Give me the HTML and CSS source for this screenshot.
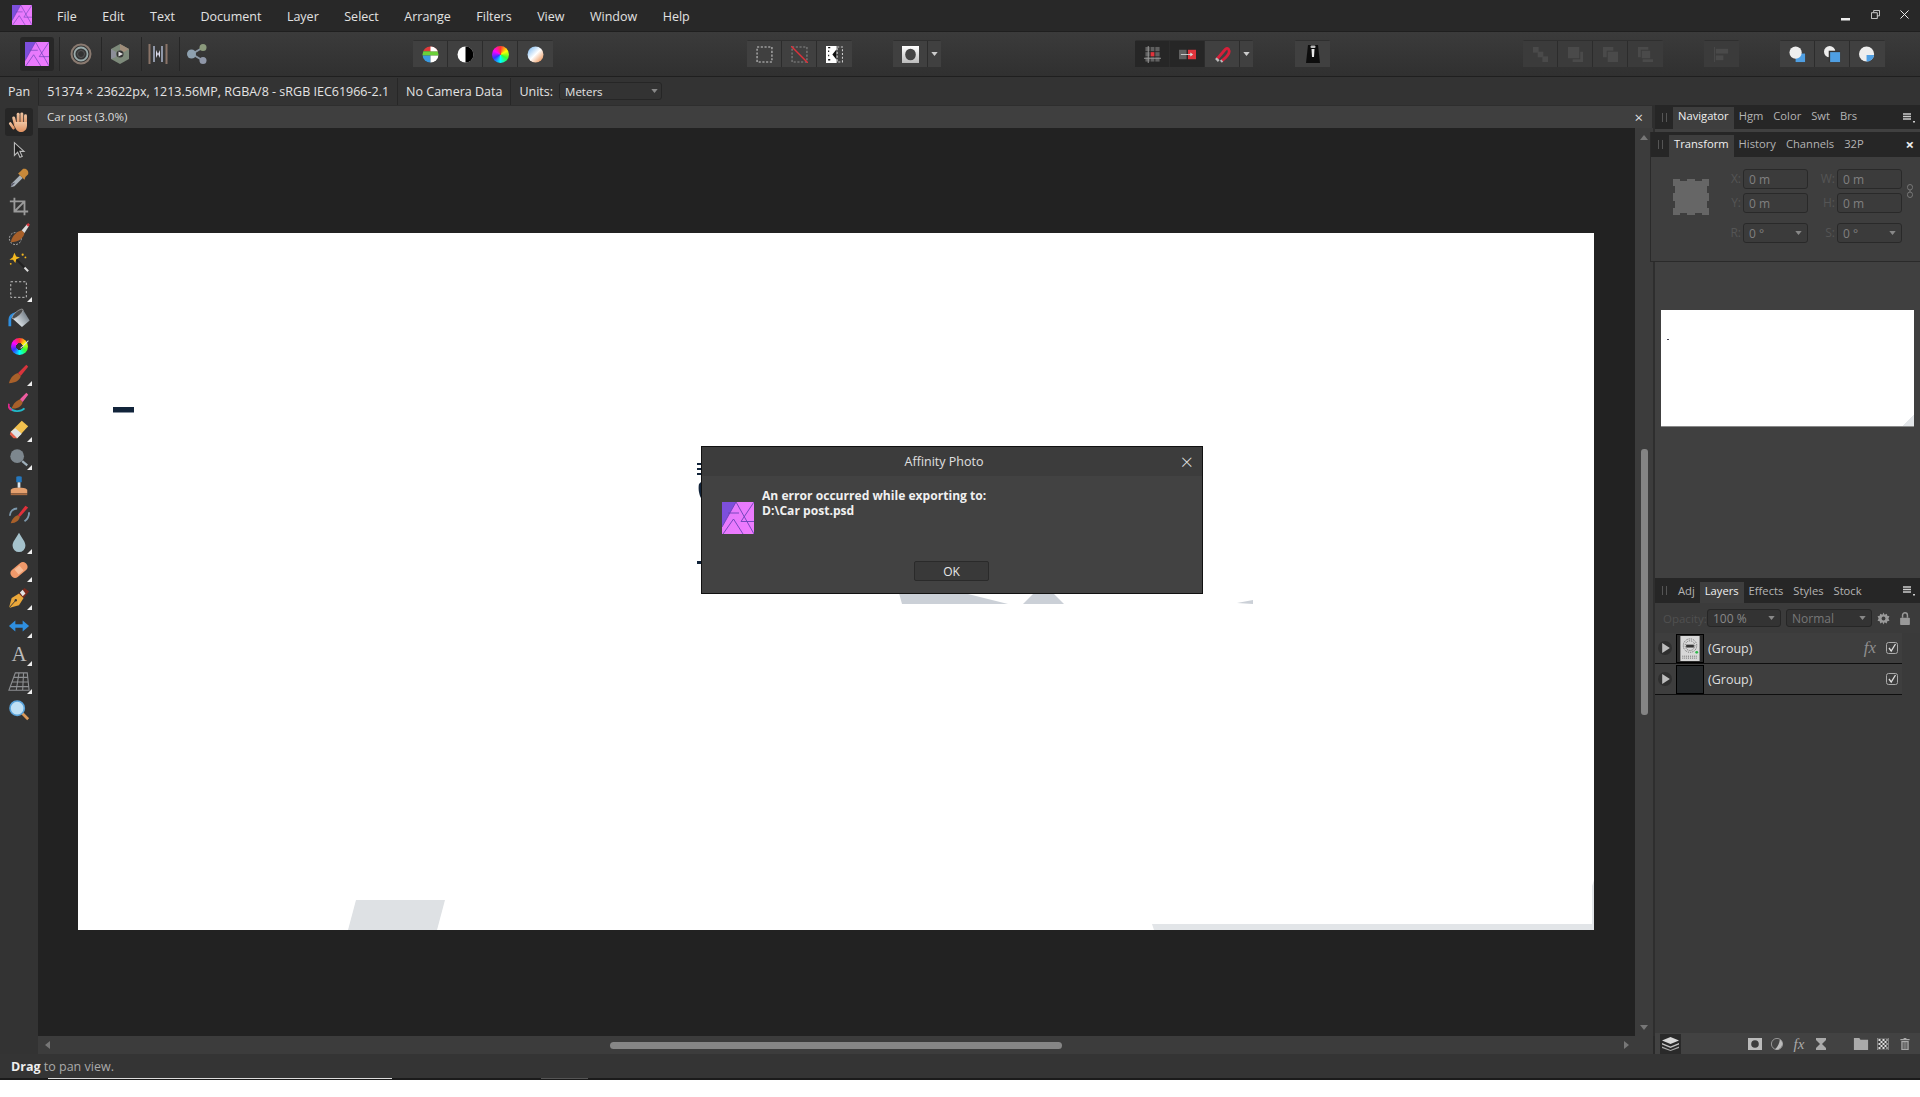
FILE: index.html
```html
<!DOCTYPE html>
<html lang="en">
<head>
<meta charset="utf-8">
<title>Affinity Photo</title>
<link rel="stylesheet" href="styles.css">
</head>
<body>
<svg class="defs" aria-hidden="true">
  <defs>
    <linearGradient id="apg" x1="0" y1="0" x2="1" y2="1"><stop offset="0" stop-color="#e278fb"/><stop offset="1" stop-color="#f07cff"/></linearGradient>
    <linearGradient id="skin" x1="0" y1="0" x2="0" y2="1"><stop offset="0" stop-color="#eec4a2"/><stop offset="1" stop-color="#e08f5e"/></linearGradient>
    <linearGradient id="silver" x1="0" y1="0" x2="1" y2="0"><stop offset="0" stop-color="#dfe6ea"/><stop offset="1" stop-color="#77818a"/></linearGradient>
    <linearGradient id="mask" x1="0" y1="0" x2="0" y2="1"><stop offset="0" stop-color="#fff"/><stop offset="1" stop-color="#bbb"/></linearGradient>
    <linearGradient id="sph" x1="0" y1="0" x2="1" y2="1"><stop offset="0" stop-color="#6fb2ee"/><stop offset=".5" stop-color="#fff"/><stop offset="1" stop-color="#e8823c"/></linearGradient>
    <symbol id="logo" viewBox="0 0 32 32">
      <rect width="32" height="32" fill="url(#apg)"/>
      <polygon points="0,0 14,0 0,25" fill="#7d4fdc"/>
      <path d="M0 25 14 0 32 32M6 11H17M32 0 19 19.500H32M1 32 11.500 17 21 32" fill="none" stroke="#6a42b8" stroke-width=".9"/>
    </symbol>
    <symbol id="tri" viewBox="0 0 8 5"><polygon points="0,0 8,0 4,5" fill="currentColor"/></symbol>
    <symbol id="burger" viewBox="0 0 12 10"><path d="M0 1H8M0 3.500H8M0 6H8" stroke="#ccc" stroke-width="1.500"/><path d="M10 8h2v1.500h-2z" fill="#ccc"/></symbol>
    <symbol id="check" viewBox="0 0 12 12"><rect x=".5" y=".5" width="11" height="11" rx="2" fill="none" stroke="#aaa"/><path d="M3 6l2.200 3L9.500 2" fill="none" stroke="#ddd" stroke-width="1.300"/></symbol>
    <symbol id="play" viewBox="0 0 20 20"><circle cx="10" cy="10" r="10" fill="#2f2f2f"/><polygon points="6,3 6,17 17,10" fill="#bdbdbd"/></symbol>
  </defs>
</svg>

<div class="app">
  <header class="menubar">
    <svg class="logo"><use href="#logo"/></svg>
    <nav class="menu">
      <span>File</span><span>Edit</span><span>Text</span><span>Document</span><span>Layer</span><span>Select</span><span>Arrange</span><span>Filters</span><span>View</span><span>Window</span><span>Help</span>
    </nav>
    <div class="winctl">
      <svg viewBox="0 0 10 10"><rect y="7" width="9" height="2.500" fill="#eee"/></svg>
      <svg viewBox="0 0 10 10"><path d="M3 2.500V.5H9.500V6.500H7M.5 3H7V9.500H.5Z" fill="none" stroke="#ddd"/></svg>
      <svg viewBox="0 0 10 10"><path d="M.5.5 9.500 9.500M9.500.5.5 9.500" stroke="#eee" stroke-width="1.100"/></svg>
    </div>
  </header>

  <section class="toolbar">
    <div class="personas">
      <div class="persona on"><svg><use href="#logo"/></svg></div>
      <div class="persona"><svg viewBox="0 0 24 24"><circle cx="12" cy="12" r="9.500" fill="none" stroke="#8a7a70" stroke-width="2"/><circle cx="12" cy="12" r="6.500" fill="none" stroke="#9aa" stroke-width="1.800"/><circle cx="12" cy="12" r="3.500" fill="#333" stroke="#555"/></svg></div>
      <div class="persona"><svg viewBox="0 0 24 24"><path d="M12 2 21 7V17L12 22 3 17V7Z" fill="#7d8a7a"/><path d="M12 2 21 7 16 10 12 8Z" fill="#a08d7a"/><path d="M3 7 8 10V15L3 17Z" fill="#8c8e98"/><circle cx="12" cy="12" r="3.500" fill="#333"/><polygon points="10.500,9.500 15,12 10.500,14.500" fill="#ddd"/></svg></div>
      <div class="persona"><svg viewBox="0 0 24 24"><path d="M3.500 2V22" stroke="#8a7468" stroke-width="2"/><path d="M8 4V20" stroke="#8f97a8" stroke-width="2"/><path d="M16 4V20" stroke="#8f97a8" stroke-width="2"/><path d="M20.500 2V22" stroke="#8a7468" stroke-width="2"/><path d="M10 8 12 12 10 16ZM14 8 12 12 14 16Z" fill="#dde"/></svg></div>
      <div class="persona"><svg viewBox="0 0 24 24"><path d="M7 12 17 6M7 12 17 18" stroke="#8a97a3" stroke-width="2"/><circle cx="6.500" cy="12" r="4.500" fill="#8ea1b0"/><circle cx="18" cy="5.500" r="3.500" fill="#8b9a7c"/><circle cx="18" cy="18.500" r="3.500" fill="#8f97a8"/></svg></div>
    </div>

    <div class="group g-color">
      <div class="btn"><svg viewBox="0 0 16 16"><defs><clipPath id="c1"><circle cx="8" cy="8" r="7.500"/></clipPath></defs><g clip-path="url(#c1)"><rect width="16" height="5" fill="#e03a3a"/><rect y="5" width="16" height="4" fill="#6ad13a"/><rect y="9" width="8" height="7" fill="#3a9ae0"/><rect x="8" y="9" width="8" height="7" fill="#fff"/><rect x="8" width="8" height="5" fill="#fff"/></g></svg></div>
      <div class="btn"><svg viewBox="0 0 16 16"><circle cx="8" cy="8" r="7.500" fill="#fff"/><path d="M8 .5a7.500 7.500 0 0 1 0 15Z" fill="#000"/></svg></div>
      <div class="btn"><span class="wheel"></span></div>
      <div class="btn"><svg viewBox="0 0 16 16"><circle cx="8" cy="8" r="7.500" fill="url(#sph)"/></svg></div>
    </div>

    <div class="group g-sel">
      <div class="btn"><svg viewBox="0 0 16 16"><rect x="1" y="1" width="14" height="14" fill="none" stroke="#ccc" stroke-dasharray="2 1.500"/></svg></div>
      <div class="btn"><svg viewBox="0 0 16 16"><rect x="1" y="1" width="14" height="14" fill="none" stroke="#888" stroke-dasharray="2 1.500"/><path d="M0 0 16 16" stroke="#e0303a" stroke-width="1.300"/></svg></div>
      <div class="btn"><svg viewBox="0 0 16 16"><rect width="10" height="16" fill="#fff"/><path d="M2 1.500H4M2 5H3M2 9H3M2 13H4" stroke="#111" stroke-width="1.300"/><path d="M10 3 6 8 10 13Z" fill="#111"/><rect x="10.500" y="1" width="5" height="14" fill="none" stroke="#ccc" stroke-dasharray="2 1.500"/></svg></div>
    </div>

    <div class="group g-mask">
      <div class="btn"><svg viewBox="0 0 16 16"><rect width="16" height="16" fill="url(#mask)"/><ellipse cx="8" cy="8" rx="5" ry="5.500" fill="#444"/></svg></div>
      <div class="btn caret"><svg class="tri"><use href="#tri"/></svg></div>
    </div>

    <div class="group g-snap">
      <div class="btn on"><svg viewBox="0 0 18 18"><g fill="#606060"><rect x="1.500" y="1" width="4.500" height="4.500"/><rect x="7" y="1" width="4" height="4.500"/><rect x="12" y="1" width="4.500" height="4.500"/><rect x="1.500" y="6.500" width="4.500" height="4.500"/><rect x="12" y="6.500" width="4.500" height="4.500"/><rect x="1.500" y="12" width="4.500" height="4.500"/><rect x="7" y="12" width="4" height="4.500"/><rect x="12" y="12" width="4.500" height="4.500"/></g><rect x="7" y="6.500" width="4" height="4.500" fill="#e0343c"/><path d="M4.500 0V18M0 13H18" stroke="#999"/></svg></div>
      <div class="btn on"><svg viewBox="0 0 18 18"><rect y="4" width="8" height="10" fill="#606060"/><rect x="9.500" y="4" width="8.500" height="10" fill="#e0343c"/><path d="M2 9H13" stroke="#ccc"/><polygon points="12,7 15,9 12,11" fill="#ddd"/></svg></div>
      <div class="btn"><svg viewBox="0 0 18 18"><path d="M3 14 12 3.500Q15 1 16 5T8 16" fill="none" stroke="#d81f3a" stroke-width="3"/><path d="M2 13 5 16" stroke="#bbb" stroke-width="2.500"/><path d="M7 15 9 17" stroke="#bbb" stroke-width="2"/></svg></div>
      <div class="btn caret"><svg class="tri"><use href="#tri"/></svg></div>
    </div>

    <div class="group g-qm">
      <div class="btn"><svg class="qm" viewBox="0 0 16 20"><path d="M3 1 13 1 15 19 1 19Z" fill="#0d0d0d"/><rect x="5.500" y="1.500" width="5" height="2.500" rx="1" fill="#bbb"/><path d="M6.500 5H9.500L9 13H7Z" fill="#e8e8e8"/></svg></div>
    </div>

    <div class="group g-arr dim">
      <div class="btn"><svg viewBox="0 0 18 18"><rect x="1" y="1" width="6" height="6"/><rect x="6" y="6" width="6" height="6"/><rect x="11" y="11" width="6" height="6"/></svg></div>
      <div class="btn"><svg viewBox="0 0 18 18"><rect x="1" y="1" width="12" height="12"/><path d="M14 6H17V17H6V14H14Z"/></svg></div>
      <div class="btn"><svg viewBox="0 0 18 18"><path d="M1 1H12V5H5V12H1Z"/><rect x="6" y="6" width="11" height="11"/></svg></div>
      <div class="btn"><svg viewBox="0 0 18 18"><path d="M1 1H12V4H4V12H1ZM6 14H17V17H6Z"/><rect x="5" y="5" width="9" height="8"/></svg></div>
    </div>

    <div class="group g-align dim">
      <div class="btn"><svg viewBox="0 0 18 18"><rect x="1" y="1" width="1" height="16"/><rect x="3" y="3" width="13" height="5"/><rect x="3" y="10" width="8" height="5"/></svg></div>
    </div>

    <div class="group g-bool">
      <div class="btn"><svg viewBox="0 0 20 18"><path d="M8 8H18V17H8Z" fill="#4f9fe3"/><circle cx="8" cy="7" r="6.500" fill="#eee"/></svg></div>
      <div class="btn"><svg viewBox="0 0 20 18"><circle cx="7" cy="6" r="6" fill="#eee"/><rect x="6" y="5" width="12" height="12" fill="#333"/><rect x="7.500" y="6.500" width="10.500" height="10.500" fill="#4f9fe3"/></svg></div>
      <div class="btn"><svg viewBox="0 0 20 18"><circle cx="9" cy="8.500" r="8" fill="#eee"/><path d="M9 9.500H17A8 8 0 0 1 9 16.500Z" fill="#4f9fe3"/></svg></div>
    </div>
  </section>

  <section class="context">
    <span class="ctx">Pan</span>
    <span class="ctx">51374 × 23622px, 1213.56MP, RGBA/8 - sRGB IEC61966-2.1</span>
    <span class="ctx">No Camera Data</span>
    <span class="ctx last">Units:</span>
    <div class="combo units">Meters<svg class="tri"><use href="#tri"/></svg></div>
  </section>

  <main class="main">
    <aside class="tools">
      <div class="tool sel"><svg viewBox="0 0 24 24"><g fill="url(#skin)" transform="translate(1.500 0)"><rect x="4.200" y="6" width="3.200" height="12" rx="1.600" transform="rotate(-14 5 12)"/><rect x="8" y="2" width="3.200" height="14" rx="1.600"/><rect x="12" y="1.500" width="3.200" height="14" rx="1.600"/><rect x="16" y="3.500" width="3.200" height="13" rx="1.600"/><path d="M6 12H19.200V16C19.200 20 16 23 12.500 23 9 23 7 20 6 17Z"/><rect x="1" y="12" width="3" height="9" rx="1.500" transform="rotate(-35 2 16)"/></g></svg></div>
      <div class="tool"><svg viewBox="0 0 24 24"><path d="M7 4V18L10.500 14.500 13 20 15.500 19 13 13.500H17.500Z" fill="#222" stroke="#bbb" stroke-width="1.200"/></svg></div>
      <div class="tool"><svg viewBox="0 0 24 24"><path d="M3 22 4 18 13 9 16 12 7 21Z" fill="#a9b2ba"/><path d="M3 22 4 18 8 17Z" fill="#556"/><path d="M11 7 18 14 19 11 22 8C23 4 20 1 16.500 2L13.500 5Z" fill="#c8893a"/></svg></div>
      <div class="tool"><svg viewBox="0 0 24 24"><path d="M7 3V18H22M2 7H18V22M7 18 18 7" fill="none" stroke="#9a9a9a" stroke-width="2"/></svg></div>
      <div class="tool"><svg viewBox="0 0 24 24"><circle cx="8" cy="17" r="6.500" fill="none" stroke="#bbb" stroke-dasharray="2 1.500"/><path d="M3 21C5 13 9 10 15 8L18 11C17 17 11 21 3 21Z" fill="#a8602a"/><path d="M15 8 21 1 23 3 18 11Z" fill="#ddd"/><path d="M20 2 22 0 24 2 22 4Z" fill="#d9343c"/></svg></div>
      <div class="tool"><svg viewBox="0 0 24 24"><path d="M9 9 22 22" stroke="#222" stroke-width="2.200"/><path d="M18 18 22 22" stroke="#ddd" stroke-width="2.200"/><path d="M7 2 9 6 13 7 9 9 8 13 5.500 9.500 1.500 9.500 5 7Z" fill="#f3b81f"/><circle cx="16" cy="4" r="1.200" fill="#f3b81f"/><circle cx="19" cy="7" r="1" fill="#f3b81f"/><circle cx="3" cy="14" r="1" fill="#f3b81f"/></svg></div>
      <div class="tool more"><svg viewBox="0 0 24 24"><rect x="3" y="3" width="17" height="17" fill="none" stroke="#ccc" stroke-dasharray="2.500 2"/></svg></div>
      <div class="tool"><svg viewBox="0 0 24 24"><path d="M2 21V14C2 10 5 8 9 7" fill="none" stroke="#2f8fe0" stroke-width="3"/><g transform="rotate(-40 14 11)"><path d="M6 6H21L19 20H8Z" fill="url(#silver)"/><ellipse cx="13.500" cy="6" rx="7.500" ry="2.500" fill="#4a4a4a" stroke="#bbb" stroke-width=".6"/></g></svg></div>
      <div class="tool"><span class="wheel big"></span></div>
      <div class="tool more"><svg viewBox="0 0 24 24"><path d="M1 22C3 15 7 12 11 11L14 14C13 19 8 22 1 22Z" fill="#a8602a"/><path d="M11 11 20 2 22 4 14 14Z" fill="#d9343c"/></svg></div>
      <div class="tool"><svg viewBox="0 0 24 24"><path d="M2 18C5 23 14 23 18 19" fill="none" stroke="#22b8c8" stroke-width="2"/><path d="M1 14C0 18 2 20 4 21" fill="none" stroke="#e0288c" stroke-width="2"/><path d="M4 19C6 13 9 11 13 9L16 12C15 17 10 20 4 19Z" fill="#a8602a"/><path d="M13 9 20 2 22 4 16 12Z" fill="#ee5ca0"/></svg></div>
      <div class="tool more"><svg viewBox="0 0 24 24"><path d="M3 14 15 2 22 8 10 21C7 21 4 18 3 14Z" fill="#f2c14e"/><path d="M3 14 8 10 15 16 10 21C7 21 4 18 3 14Z" fill="#dfe3e6"/><path d="M3 14 10 21 6 21 2 17Z" fill="#e2604c"/></svg></div>
      <div class="tool more"><svg viewBox="0 0 24 24"><circle cx="10" cy="10" r="7.500" fill="#7d878e"/><path d="M15.500 15.500 21 20" stroke="#9fb0bb" stroke-width="2.500"/></svg></div>
      <div class="tool"><svg viewBox="0 0 24 24"><path d="M9 8H15V2C15 1 9 1 9 2Z" fill="#2578bf"/><rect x="10.500" y="8" width="3" height="6" fill="#dfe7ec"/><path d="M3 20V16C5 14 8 14 12 14S19 14 21 16V20Z" fill="#e5a06e"/><rect x="3" y="20" width="18" height="2" fill="#a86b42"/></svg></div>
      <div class="tool"><svg viewBox="0 0 24 24"><path d="M3 22C5 16 8 14 11 13L13 15C12 19 9 22 3 22Z" fill="#a8602a"/><path d="M11 13 19 3 22 5 13 15Z" fill="#e0303a"/><path d="M2 14C2 9 6 6 10 6M23 10C23 15 21 18 18 20" fill="none" stroke="#7d99ad" stroke-width="2"/></svg></div>
      <div class="tool more"><svg viewBox="0 0 24 24"><path d="M12 2C8 9 5 12 5 16A7 7 0 0 0 19 16C19 12 16 9 12 2Z" fill="#a5c2cc"/></svg></div>
      <div class="tool more"><svg viewBox="0 0 24 24"><rect x="1.500" y="7" width="21" height="10" rx="4.500" fill="#f0996a" transform="rotate(-40 12 12)"/><rect x="8.500" y="8.500" width="7" height="7" fill="#f8bd98" transform="rotate(-40 12 12)"/></svg></div>
      <div class="tool more"><svg viewBox="0 0 24 24"><path d="M1 23 4 12 12 7 17 12 12 20Z" fill="#eba83a"/><path d="M1 23 8 15" stroke="#333"/><circle cx="8.500" cy="14.500" r="1.300" fill="#333"/><path d="M12 7 18 1 23 5 17 12Z" fill="#7c2a1d"/><path d="M13 6 16 10 19 7 16 3Z" fill="#e3e3e3"/></svg></div>
      <div class="tool more"><svg viewBox="0 0 24 24"><path d="M1 12 8 6V10H16V6L23 12 16 18V14H8V18Z" fill="#2f8fe0"/></svg></div>
      <div class="tool more atool"><span>A</span></div>
      <div class="tool more"><svg viewBox="0 0 24 24"><path d="M8 2H21L23 21H1Z M6 7H22 M4 12H22 M3 17H23 M12 2 9 21 M17 2 16 21" fill="none" stroke="#8d8f92" stroke-width="1.200"/></svg></div>
      <div class="tool"><svg viewBox="0 0 24 24"><path d="M15 15 22 22" stroke="#dc9a5a" stroke-width="3"/><circle cx="10" cy="10" r="7.800" fill="#bfe0f5" stroke="#5aa4dc" stroke-width="1.800"/></svg></div>
    </aside>

    <div class="center">
      <div class="doctab"><span>Car post (3.0%)</span><span class="docx">×</span></div>
      <div class="canvasrow">
        <div class="canvas">
          <div class="page">
            <svg class="art" viewBox="78 233 1516 697">
              <rect x="113" y="407" width="21" height="5" fill="#12243a"/>
              <rect x="113" y="412" width="21" height="1" fill="#8892a0"/>
              <g fill="#12243a">
                <rect x="697" y="463" width="4" height="2"/><rect x="697" y="468" width="4" height="2"/><rect x="697" y="473" width="4" height="2"/>
                <path d="M701 482V498C699 495 698 488 699 484Z"/>
                <rect x="697" y="561" width="4" height="3"/>
              </g>
              <g fill="#cbd0d7">
                <polygon points="899,593 964,593 1008,604 902,604"/>
                <polygon points="1034,593 1053,593 1064,604 1023,604"/>
                <polygon points="1237,603 1253,600 1253,604"/>
              </g>
              <polygon points="356,900 445,900 437,930 348,930" fill="#dee1e4"/>
              <polygon points="1152,924 1592,924 1592,886 1594,880 1594,930 1154,930" fill="#e2e5e8"/>
            </svg>
          </div>
        </div>
        <div class="vscroll">
          <svg class="arr"><use href="#tri" class="up"/></svg>
          <div class="vthumb"></div>
          <svg class="arr down"><use href="#tri"/></svg>
        </div>
      </div>
      <div class="hscroll">
        <svg class="harr" viewBox="0 0 5 8"><polygon points="5,0 5,8 0,4"/></svg>
        <div class="hthumb"></div>
        <svg class="harr end" viewBox="0 0 5 8"><polygon points="0,0 0,8 5,4"/></svg>
      </div>
    </div>

    <aside class="right">
      <div class="tabs navtabs">
        <i class="grip"></i>
        <span class="tab on">Navigator</span><span class="tab">Hgm</span><span class="tab">Color</span><span class="tab">Swt</span><span class="tab">Brs</span>
        <svg class="burger"><use href="#burger"/></svg>
      </div>
      <section class="transform">
        <div class="tabs ttabs">
          <i class="grip"></i>
          <span class="tab on">Transform</span><span class="tab">History</span><span class="tab">Channels</span><span class="tab">32P</span>
          <span class="pclose">×</span>
        </div>
        <div class="tbody">
          <svg class="anchor" viewBox="0 0 36 36"><path d="M0 0H7V2H14V0H22V2H29V0H36V7H34V14H36V22H34V29H36V36H29V34H22V36H14V34H7V36H0V29H2V22H0V14H2V7H0Z" fill="#666"/></svg>
          <div class="fields">
            <label>X:</label><div class="field">0 m</div><label>W:</label><div class="field">0 m</div>
            <label>Y:</label><div class="field">0 m</div><label>H:</label><div class="field">0 m</div>
            <label class="sp">R:</label><div class="field sp">0 °<svg class="tri"><use href="#tri"/></svg></div><label class="sp">S:</label><div class="field sp">0 °<svg class="tri"><use href="#tri"/></svg></div>
          </div>
          <svg class="link" viewBox="0 0 6 14"><rect x=".5" y=".5" width="5" height="5.500" rx="2.500" fill="none" stroke="#777"/><rect x=".5" y="8" width="5" height="5.500" rx="2.500" fill="none" stroke="#777"/><path d="M3 6V8" stroke="#777"/></svg>
        </div>
      </section>
      <div class="preview"><i></i></div>
      <section class="layers">
        <div class="tabs ltabs">
          <i class="grip"></i>
          <span class="tab">Adj</span><span class="tab on">Layers</span><span class="tab">Effects</span><span class="tab">Styles</span><span class="tab">Stock</span>
          <svg class="burger"><use href="#burger"/></svg>
        </div>
        <div class="lctl">
          <span class="oplabel">Opacity:</span>
          <div class="combo op">100 %<svg class="tri"><use href="#tri"/></svg></div>
          <div class="combo blend">Normal<svg class="tri"><use href="#tri"/></svg></div>
          <svg class="gear" viewBox="0 0 24 24"><path d="M12 1 14 5 18 3 19 7 23 8 21 12 23 16 19 17 18 21 14 19 12 23 10 19 6 21 5 17 1 16 3 12 1 8 5 7 6 3 10 5Z" fill="#9a9a9a"/><circle cx="12" cy="12" r="3.500" fill="#3b3b3b"/></svg>
          <svg class="lock" viewBox="0 0 12 16"><path d="M3 7V4A3 3 0 0 1 9 4V7" fill="none" stroke="#999" stroke-width="1.800"/><rect y="7" width="12" height="9" rx="1" fill="#999"/></svg>
        </div>
        <div class="lrow">
          <svg class="play"><use href="#play"/></svg>
          <div class="thumb t1"><svg viewBox="0 0 20 26"><rect width="20" height="26" fill="#d8d8d8"/><g fill="none" stroke="#666" stroke-dasharray="1 1"><circle cx="10" cy="10" r="7"/><circle cx="10" cy="10" r="5"/><path d="M2 21H18M2 23H18"/></g><rect x="6" y="9" width="8" height="3" fill="#333"/><circle cx="17" cy="17" r="1.500" fill="#2fb84a"/></svg></div>
          <span class="lname">(Group)</span>
          <em class="fx">fx</em>
          <svg class="check"><use href="#check"/></svg>
        </div>
        <div class="lrow">
          <svg class="play"><use href="#play"/></svg>
          <div class="thumb t2"></div>
          <span class="lname">(Group)</span>
          <svg class="check"><use href="#check"/></svg>
        </div>
        <div class="lbottom">
          <div class="lbtn"><svg viewBox="0 0 17 14"><path d="M8.500 0 17 3.500 8.500 7 0 3.500Z" fill="#d8d8d8"/><path d="M0 6 8.500 9.500 17 6 17 7.500 8.500 11 0 7.500Z" fill="#c4c4c4"/><path d="M0 9.500 8.500 13 17 9.500 17 11 8.500 14 0 11Z" fill="#aaa"/></svg></div>
          <div class="licons">
            <svg viewBox="0 0 14 12"><rect width="14" height="12" fill="#bbb"/><circle cx="7" cy="6" r="3.800" fill="#3c3c3c"/></svg>
            <svg viewBox="0 0 12 12"><circle cx="6" cy="6" r="5.600" fill="#444" stroke="#aaa" stroke-width=".8"/><path d="M7 .6A5.600 5.600 0 0 1 6 11.600C8 8 8 4 7 .6Z" fill="#bbb" transform="rotate(20 6 6)"/></svg>
            <em class="fx small">fx</em>
            <svg viewBox="0 0 10 12"><path d="M0 0H10V2L6 6 10 10V12H0V10L4 6 0 2Z" fill="#aaa"/></svg>
            <svg class="gapl" viewBox="0 0 13 11"><path d="M0 0H5L6 1.500H13V11H0Z" fill="#aaa"/></svg>
            <svg viewBox="0 0 11 12"><rect width="11" height="12" fill="#444" stroke="#aaa" stroke-width=".6"/><path d="M1 1H3V3H1ZM5 1H7V3H5ZM9 1H10V3H9ZM3 3H5V5H3ZM7 3H9V5H7ZM1 5H3V7H1ZM5 5H7V7H5ZM9 5H10V7H9ZM3 7H5V9H3ZM7 7H9V9H7ZM1 9H3V11H1ZM5 9H7V11H5ZM9 9H10V11H9Z" fill="#ddd"/></svg>
            <svg viewBox="0 0 10 13"><path d="M3.500 0H6.500V1.200H10V2.400H0V1.200H3.500ZM1 3.200H9V13H1Z" fill="#aaa"/><path d="M3 4.500V12M5 4.500V12M7 4.500V12" stroke="#3c3c3c"/></svg>
          </div>
        </div>
      </section>
    </aside>
  </main>

  <footer class="status"><b>Drag</b> to pan view.</footer>
  <div class="bottomline"><i class="seg a"></i><i class="seg b"></i></div>

  <div class="dialog" role="dialog">
    <div class="dtitle"><span>Affinity Photo</span><span class="dclose">×</span></div>
    <div class="dbody">
      <svg class="dicon"><use href="#logo"/></svg>
      <div class="dmsg"><p>An error occurred while exporting to:</p><p>D:\Car post.psd</p></div>
    </div>
    <div class="dfoot"><button class="ok">OK</button></div>
  </div>
</div>
</body>
</html>
```
FILE: styles.css
```css
* { box-sizing: border-box; }
html, body { margin: 0; padding: 0; height: 1097px; background: #fff; overflow: hidden; }
body { font-family: "Open Sans", "Noto Sans", sans-serif; font-size: 12px; color: #ddd; }
.defs { position: absolute; width: 0; height: 0; }
svg { display: block; }

.app { position: relative; width: 1920px; height: 1080px; display: flex; flex-direction: column; background: #3a3a3a; }

/* menu bar */
.menubar { height: 32px; flex: none; display: flex; align-items: center; background: #282828; border-bottom: 1px solid #1f1f1f; padding-left: 12px; }
.logo { width: 20px; height: 20px; margin-top: -2px; }
.menu { display: flex; gap: 25.500px; margin-left: 25px; padding-top: 2px; font-size: 12.500px; color: #e2e2e2; }
.winctl { margin-left: auto; display: flex; gap: 20px; padding-right: 11px; }
.winctl svg { width: 9px; height: 9px; }
.winctl svg:first-child { width: 10px; height: 10px; margin-top: 1px; }

/* main toolbar */
.toolbar { height: 45px; flex: none; display: flex; align-items: center; background: linear-gradient(#3b3b3b, #303030); border-bottom: 1px solid #1f1f1f; padding: 0 0 1px 20px; }
.personas { width: 203px; flex: none; display: flex; align-items: center; }
.persona { flex: none; height: 34px; display: flex; align-items: center; justify-content: center; border-right: 1px solid #262626; }
.persona svg { width: 24px; height: 24px; }
.persona:nth-child(1) { width: 40px; justify-content: flex-start; }
.persona:nth-child(2) { width: 42px; }
.persona:nth-child(3) { width: 40px; padding-right: 4px; }
.persona:nth-child(4) { width: 38px; padding-right: 6px; }
.persona:nth-child(5) { width: 38px; padding-right: 4px; border-right: 0; }
.persona.on svg { width: 34px; height: 34px; padding: 5px; background: #272727; border-radius: 3px; }
.group { display: flex; height: 27px; flex: none; border-radius: 2px; border-top: 1px solid #2f2f2f; }
.btn { width: 35px; display: flex; align-items: center; justify-content: center; background: #404040; border-right: 1px solid #2c2c2c; }
.btn:last-child { border-right: 0; }
.btn svg, .wheel { width: 17px; height: 17px; }
.btn.on { background: #262626; }
.btn.caret { width: 13px; }
.tri { color: #ccc; }
.btn .tri { width: 7px; height: 4px; }
.btn .qm { width: 16px; height: 20px; }
.wheel { display: block; border-radius: 50%; background: conic-gradient(#f33, #ff0, #3f3, #0ff, #33f, #f0f, #f33); }
.g-color { margin-left: 190px; }
.g-sel { margin-left: 194px; }
.g-mask { margin-left: 41px; }
.g-snap { margin-left: 194px; }
.g-qm { margin-left: 42px; }
.g-arr { margin-left: 193px; }
.g-align { margin-left: 41px; }
.g-bool { margin-left: 41px; }
.g-bool svg { width: 19px; height: 17px; }
.dim .btn { background: #3b3b3b; }
.dim svg { fill: #4a4a4a; }

/* context bar */
.context { height: 28px; flex: none; display: flex; align-items: center; background: #333; font-size: 12.500px; color: #e4e4e4; }
.ctx { padding: 0 8px; line-height: 27px; border-right: 1px solid #272727; }
.ctx.last { border-right: 0; padding-right: 6px; }
.combo { display: flex; align-items: center; justify-content: space-between; height: 18px; border: 1px solid #262626; border-radius: 3px; background: #333; padding: 0 5px; font-size: 11.500px; }
.combo .tri { width: 7px; height: 4px; }
.units { width: 103px; padding-right: 3px; }

/* workspace */
.main { flex: 1; min-height: 0; display: flex; background: #2e2e2e; }
.tools { width: 38px; flex: none; display: flex; flex-direction: column; padding-top: 3px; background: #333; }
.tool { position: relative; height: 28px; flex: none; display: flex; align-items: center; justify-content: center; }
.tool svg { width: 22px; height: 22px; }
.tool.sel svg { width: 28px; height: 28px; padding: 3px; background: #262626; border-radius: 3px; }
.tool.more::after { content: ""; position: absolute; right: 6px; bottom: 2px; border: solid transparent; border-width: 0 0 5px 5px; border-bottom-color: #eee; }
.wheel.big { position: relative; box-sizing: content-box; width: 9px; height: 9px; border: 4px solid transparent; background: radial-gradient(circle, #333 0 28%, transparent 30%), conic-gradient(#f33, #ff0, #3f3, #0ff, #33f, #f0f, #f33); background-origin: border-box; }
.wheel.big::after { content: ""; position: absolute; left: 4px; top: 2px; width: 11px; height: 1px; background: #ddd; transform: rotate(-45deg); }
.atool span { font-family: "Liberation Serif", serif; font-size: 21px; color: #bbb; line-height: 1; }

.center { width: 1617px; flex: none; display: flex; flex-direction: column; }
.doctab { height: 22px; width: 1614px; margin-top: 1px; flex: none; display: flex; align-items: center; justify-content: space-between; background: #3f3f3f; padding: 0 9px 1px; font-size: 11.500px; color: #ddd; }
.docx { font-size: 15px; }
.canvasrow { flex: 1; min-height: 0; display: flex; }
.canvas { width: 1597px; flex: none; padding: 105px 0 0 40px; background: #222; }
.page { width: 1516px; height: 697px; background: #fff; }
.art { width: 1516px; height: 697px; }
.vscroll { width: 18px; flex: none; display: flex; flex-direction: column; align-items: center; background: #3c3c3c; padding: 6px 0 5px; margin-right: 2px; color: #777; }
.arr { width: 8px; height: 7px; color: #777; }
.up { transform: rotate(180deg); transform-origin: center; }
.arr.down { margin-top: auto; }
.vthumb { width: 7px; height: 266px; margin-top: 308px; background: #848484; border-radius: 3px; }
.hscroll { height: 18px; width: 1617px; flex: none; display: flex; align-items: center; background: #3c3c3c; padding-left: 7px; border-right: 2px solid #2a2a2a; }
.harr { width: 5px; height: 8px; fill: #777; }
.harr.end { margin-left: auto; margin-right: 24px; }
.hthumb { width: 452px; height: 7px; margin-left: 560px; background: #868686; border-radius: 4px; }

/* right panels */
.right { flex: 1; min-width: 0; display: flex; flex-direction: column; background: #404040; }
.tabs { display: flex; align-items: flex-end; background: #262626; position: relative; font-size: 11.200px; color: #b4b4b4; }
.grip { align-self: center; width: 5px; height: 9px; border: solid #555; border-width: 0 1px; margin: 0 6px 0 7px; flex: none; }
.tab { padding: 0 5px; height: 22px; line-height: 18px; }
.tab.on { background: #3e3e3e; color: #f0f0f0; }
.burger { position: absolute; right: 5px; top: 8px; width: 12px; height: 10px; }
.navtabs { height: 24px; flex: none; }
.transform { margin: 3px 0 0 -5px; height: 130px; flex: none; background: #3e3e3e; border: 1px solid #2a2a2a; border-width: 0 0 1px 1px; position: relative; z-index: 1; }
.ttabs { height: 25px; }
.pclose { position: absolute; right: 6px; top: 2px; font-size: 15px; font-weight: 700; color: #eee; }
.tbody { display: flex; align-items: flex-start; padding: 12px 0 0 22px; }
.anchor { width: 36px; height: 36px; margin-top: 10px; flex: none; }
.fields { display: grid; grid-template-columns: 27px 65px 25px 65px; gap: 4px 2px; margin-left: 5px; }
.fields label { text-align: right; color: #555; font-size: 12px; line-height: 20px; }
.field { display: flex; justify-content: space-between; align-items: center; height: 20px; border: 1px solid #292929; border-radius: 3px; padding: 0 5px; font-size: 12px; color: #808080; background: #3b3b3b; }
.field .tri { width: 7px; height: 4px; color: #888; }
.sp { margin-top: 6px; }
.link { width: 6px; height: 14px; margin: 15px 0 0 5px; }
.preview { position: relative; width: 253px; height: 117px; margin: 48px 0 0 6px; flex: none; background: linear-gradient(135deg, #fff 97%, #e3e6e9 97%); border-bottom: 1px solid #888; }
.preview i { position: absolute; left: 6px; top: 29px; width: 2px; height: 1px; background: #445; }

.layers { flex: 1; min-height: 0; display: flex; flex-direction: column; margin-top: 151px; background: #3a3a3a; }
.ltabs { height: 25px; flex: none; }
.ltabs .tab { height: 21px; }
.lctl { height: 30px; flex: none; display: flex; align-items: center; background: #3b3b3b; padding-left: 8px; }
.oplabel { color: #505050; font-size: 11.500px; width: 44px; }
.combo.op { width: 74px; color: #888; font-size: 12px; }
.combo.blend { width: 86px; margin-left: 5px; color: #777; font-size: 12px; }
.combo .tri { color: #888; }
.gear { width: 13px; height: 13px; margin-left: 5px; }
.lock { width: 10px; height: 13px; margin-left: 10px; }
.lrow { width: 247px; height: 31px; flex: none; display: flex; align-items: center; background: #3e3e3e; border-bottom: 1px solid #0f0f0f; padding-left: 3px; }
.play { width: 14px; height: 14px; flex: none; }
.thumb { width: 28px; height: 29px; margin-left: 4px; flex: none; border: 1px solid #000; }
.thumb svg { width: 100%; height: 100%; padding: 1px 3px; background: #2a2a2a; }
.t2 { background: #26292b; }
.lname { margin-left: 4px; font-size: 12.500px; color: #ddd; flex: 1; }
.fx { font-family: "Liberation Serif", serif; font-style: italic; color: #8f8f8f; font-size: 17px; margin-right: 10px; }
.fx.small { margin: 0; color: #aaa; width: 22px; text-align: center; font-size: 15px; line-height: 12px; }
.check { width: 12px; height: 12px; margin-right: 4px; }
.lbottom { margin-top: auto; height: 21px; flex: none; display: flex; align-items: center; background: #424242; padding-left: 5px; }
.lbtn { width: 21px; height: 20px; display: flex; align-items: center; justify-content: center; background: #2a2a2a; }
.lbtn svg { width: 17px; height: 14px; }
.licons { display: flex; align-items: center; margin-left: 63px; }
.licons svg { height: 12px; width: 22px; flex: none; }
.licons .gapl { margin-left: 18px; }

/* status */
.status { height: 24px; flex: none; background: #343434; padding: 1px 0 0 11px; line-height: 24px; font-size: 12.500px; color: #aaa; }
.status b { color: #eee; }
.bottomline { height: 2px; flex: none; display: flex; align-items: flex-start; background: #1b1b1b; }
.seg { display: block; height: 1px; }
.seg.a { width: 344px; margin-left: 48px; background: #ddd; }
.seg.b { width: 47px; margin-left: 149px; background: #555; }

/* dialog */
.dialog { position: absolute; left: 701px; top: 446px; width: 502px; height: 148px; display: flex; flex-direction: column; background: #424242; border: 1px solid #111; z-index: 5; }
.dtitle { height: 29px; flex: none; display: flex; align-items: center; justify-content: center; position: relative; background: #3c3c3c; font-size: 12.500px; color: #e0e0e0; padding-right: 16px; }
.dclose { position: absolute; right: 9px; top: 4px; font-size: 22px; line-height: 20px; font-weight: 300; color: #ddd; }
.dbody { display: flex; align-items: flex-start; padding: 12px 0 0 20px; flex: 1; }
.dicon { width: 32px; height: 32px; margin-top: 14px; flex: none; }
.dmsg { margin-left: 8px; font-size: 12.100px; font-weight: 700; color: #f0f0f0; line-height: 15px; }
.dmsg p { margin: 0; }
.dfoot { display: flex; padding: 0 0 12px 212px; }
.ok { width: 75px; height: 20px; padding: 0; background: #393939; border: 1px solid #2a2a2a; border-radius: 2px; color: #e8e8e8; font: 12px "Open Sans", sans-serif; }
```
